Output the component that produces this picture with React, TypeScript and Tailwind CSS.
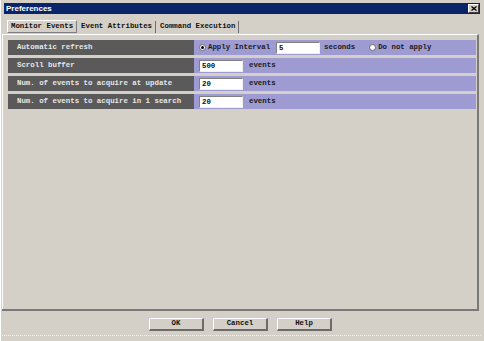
import React from 'react';

const mono = "font-['Liberation_Mono','Courier_New',monospace]";

const Field = ({ value }: { value: string }) => (
  <div
    className={`w-[44px] h-[12px] bg-white border-t border-l border-t-[#808080] border-l-[#808080] border-b border-r border-b-[#f0f0f0] border-r-[#f0f0f0] text-[7.4px] leading-[10px] pl-[2px] text-[#111] ${mono}`}
  >
    {value}
  </div>
);

const Radio = ({ checked }: { checked?: boolean }) => (
  <span className="w-[7px] h-[7px] rounded-full bg-white border border-[#6a6a6a] flex items-center justify-center">
    {checked && <span className="w-[3px] h-[3px] rounded-full bg-black" />}
  </span>
);

const Row = ({ label, children }: { label: string; children: React.ReactNode }) => (
  <div className="flex h-[15px]">
    <div className="w-[186px] bg-[#5a5a5a] text-[#e8e8e8] flex items-center pl-[9px]">{label}</div>
    <div className="flex-1 bg-[#9e9bd3] text-[#1a1a1a] flex items-center pl-[5px] gap-[6px]">{children}</div>
  </div>
);

const Button = ({ label }: { label: string }) => (
  <button className="w-[55px] h-[13px] bg-[#d4d0c8] border-t border-l border-t-white border-l-white border-b-2 border-r-2 border-b-[#6b6b6b] border-r-[#6b6b6b] flex items-center justify-center text-[7.4px] text-[#111]">
    {label}
  </button>
);

export default function App() {
  return (
    <div className={`w-[484px] h-[341px] bg-[#d4d0c8] flex flex-col border-l border-l-white border-r-[3px] border-r-[#d4d0c8] pl-[1px] ${mono} text-[7.4px] font-bold`}>
      <div className="mt-[3px] ml-[2px] mr-[1px] h-[11px] bg-[#0a246a] flex items-center justify-between pl-[2px] pr-[1px]">
        <span className="text-white font-bold text-[8px] font-['Liberation_Sans',Arial,sans-serif] leading-none">Preferences</span>
        <span className="w-[11px] h-[9px] bg-[#d4d0c8] border-t border-l border-white border-b border-r border-b-[#404040] border-r-[#404040] flex items-center justify-center">
          <svg width="6" height="5" viewBox="0 0 6 5">
            <path d="M0.5 0.5 L5.5 4.5 M5.5 0.5 L0.5 4.5" stroke="#000" strokeWidth="1.3" />
          </svg>
        </span>
      </div>

      <div className="flex mt-[6px] ml-[5px] h-[13px] items-end">
        <div className="h-[13px] px-[3px] bg-[#d4d0c8] border border-t-white border-l-white border-b-[#808080] border-r-[#808080] flex items-center text-[#111]">
          Monitor Events
        </div>
        <div className="h-[12px] px-[3px] ml-[1px] flex items-center text-[#111] border-r border-r-[#707070]">Event Attributes</div>
        <div className="h-[12px] px-[3px] ml-[1px] flex items-center text-[#111] border-r border-r-[#707070]">Command Execution</div>
      </div>

      <div className="flex-1 mt-[1px] mr-[2px] border-t border-l border-t-white border-l-white border-r-2 border-r-[#7a7a7a] flex flex-col gap-[3px] pt-[5px] pl-[5px] pr-[1px]">
        <Row label="Automatic refresh">
          <span className="flex items-center gap-[2px]">
            <Radio checked />
            <span>Apply Interval</span>
          </span>
          <Field value="5" />
          <span className="ml-[-2px]">seconds</span>
          <span className="flex items-center gap-[2px] ml-[8px]">
            <Radio />
            <span>Do not apply</span>
          </span>
        </Row>
        <Row label="Scroll buffer">
          <Field value="500" />
          <span>events</span>
        </Row>
        <Row label="Num. of events to acquire at update">
          <Field value="20" />
          <span>events</span>
        </Row>
        <Row label="Num. of events to acquire in 1 search">
          <Field value="20" />
          <span>events</span>
        </Row>
      </div>

      <div className="h-[2px] bg-[#7a7a7a] mr-[2px]" />
      <div className="h-[25px] flex justify-center gap-[9px] pt-[7px] pr-[2px] border-b border-dotted border-b-[#f4f4f4]">
        <Button label="OK" />
        <Button label="Cancel" />
        <Button label="Help" />
      </div>
      <div className="h-[5px]" />
    </div>
  );
}
